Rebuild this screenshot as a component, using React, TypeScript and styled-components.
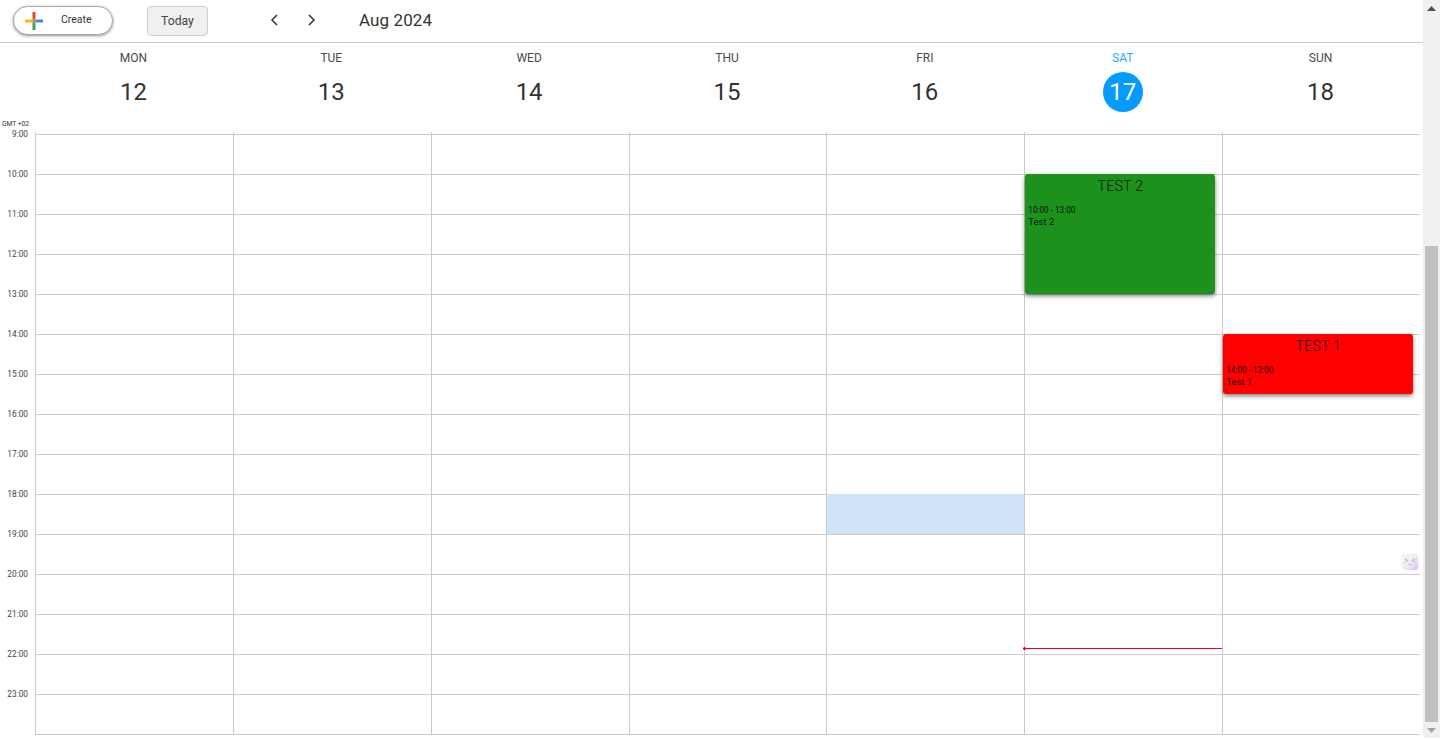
import React from "react";
import styled, { createGlobalStyle } from "styled-components";

const Global = createGlobalStyle`
  html, body { margin: 0; padding: 0; background: #fff; overflow: hidden; }
  body { font-family: Roboto, "Liberation Sans", sans-serif; color: #212121; }
`;

const Page = styled.div`
  width: 1442px; height: 744px; display: flex; align-items: flex-start; overflow: hidden;
`;
const Main = styled.div`
  width: 1423px; flex: none; display: flex; flex-direction: column;
`;
const Toolbar = styled.header`
  height: 42px; border-bottom: 1px solid #cacaca; display: flex; align-items: center; padding-left: 13px;
`;
const CreateButton = styled.button`
  width: 100px; height: 29px; margin-top: -1px; box-sizing: border-box; border: 1px solid #a9a3a3; border-radius: 15px; background: #fff;
  box-shadow: 0 1px 3px rgba(60, 40, 40, .5); display: flex; align-items: center; padding: 0 0 0 11px;
  font: 400 10.5px Roboto, sans-serif; color: #333;
  span { margin-left: 18px; margin-top: -3px; }
`;
const TodayButton = styled.button`
  width: 61px; height: 30px; margin-left: 34px; box-sizing: border-box; border: 1px solid #cfcfcf; border-radius: 4px; background: #f0f0f0;
  font: 400 12.2px Roboto, sans-serif; color: #444; padding: 0;
`;
const NavIcon = styled.svg<{ $gap: number }>`
  width: 16px; height: 16px; margin-left: ${p => p.$gap}px; margin-top: -3px; flex: none;
  fill: none; stroke: #333; stroke-width: 1.5;
`;
const Month = styled.div`
  margin-left: 40px; font-size: 17px; color: #333; margin-top: -2px; letter-spacing: .1px;
`;
const DayHeader = styled.div`
  width: 1420px; height: 89px; display: grid; grid-template-columns: 35px repeat(7, 1fr);
`;
const Gmt = styled.div`
  align-self: end; font-size: 6.8px; line-height: 8px; letter-spacing: -.1px; padding: 0 0 4px 2px; white-space: nowrap; color: #333;
`;
const DayCell = styled.div`
  display: flex; flex-direction: column; align-items: center; padding: 8px 1px 0 0;
`;
const Weekday = styled.div<{ $today?: boolean }>`
  font-size: 12px; line-height: 14px; color: ${p => (p.$today ? "#2ba6ff" : "#4a4a4a")};
`;
const DayNumber = styled.div<{ $today?: boolean }>`
  width: 40px; height: 40px; margin-top: 7px; border-radius: 50%;
  display: flex; align-items: center; justify-content: center;
  font-size: 24px; font-weight: 400; color: ${p => (p.$today ? "#fff" : "#333")}; background: ${p => (p.$today ? "#039bff" : "transparent")};
`;
const Body = styled.div`
  width: 1420px; display: grid; grid-template-columns: 35px repeat(7, 1fr);
`;
const Gutter = styled.div`
  margin-top: -18px; height: 600px;
`;
const HourLabel = styled.div`
  height: 40px; line-height: 41px; font-size: 8.3px; text-align: right; padding-right: 7px; color: #444;
`;
const Column = styled.div`
  position: relative; border-left: 1px solid #cacaca; padding-top: 2px;
`;
const Slot = styled.div`
  height: 39px; border-top: 1px solid #cacaca;
`;
const LastLine = styled.div`
  height: 0; border-top: 1px solid #cacaca;
`;
const Event = styled.div<{ $bg: string; $top: number; $h: number }>`
  position: absolute; left: 0; width: 190px; top: ${p => p.$top}px; height: ${p => p.$h}px; box-sizing: border-box;
  background: ${p => p.$bg}; border-radius: 3px; box-shadow: 0 2px 4px rgba(0, 0, 0, .5); color: #111; padding: 4px 3px 0 3px; z-index: 2;
`;
const EventTitle = styled.div`
  text-align: center; font-size: 14.5px; font-weight: 300; line-height: 18px;
`;
const EventTime = styled.div`
  margin-top: 8px; font-size: 8.2px; line-height: 12px;
`;
const EventText = styled.div`
  font-size: 9.5px; line-height: 12px;
`;
const Selection = styled.div`
  position: absolute; left: 0; right: 0; top: 362px; height: 40px; background: #cfe4f8; z-index: 1;
`;
const NowLine = styled.div`
  position: absolute; left: -2px; right: 0; top: 516px; height: 1px; background: #f00; z-index: 3;
  &::before { content: ""; position: absolute; left: 0; top: -1px; width: 3px; height: 3px; background: #f00; border-radius: 50%; }
`;
const Widget = styled.div`
  position: absolute; left: 1402px; top: 554px; width: 16px; height: 16px; border-radius: 3px; z-index: 4;
  background: linear-gradient(135deg, #f4f2f6 0%, #efeaf5 55%, #d8c0f0 100%); box-shadow: 0 0 3px rgba(120,100,160,.1);
  display: flex;
  svg { width: 16px; height: 16px; }
`;
const Scrollbar = styled.div`
  width: 17px; height: 738px; flex: none; background: #f1f1f1; display: flex; flex-direction: column; align-items: center;
`;
const Arrow = styled.svg<{ $color: string }>`
  width: 9px; height: 5px; flex: none; fill: ${p => p.$color};
`;
const UpArrow = styled(Arrow)`
  margin-top: 6px;
`;
const Thumb = styled.div`
  width: 13px; height: 476px; margin-top: 235px; background: #c0c0c0;
`;
const DownArrow = styled(Arrow)`
  margin-top: 6px;
`;

const days = [
  ["MON", 12], ["TUE", 13], ["WED", 14], ["THU", 15], ["FRI", 16], ["SAT", 17], ["SUN", 18],
] as const;
const hours = Array.from({ length: 15 }, (_, i) => `${i + 9}:00`);

const Plus = () => (
  <svg width="18" height="18" viewBox="0 0 18 18" style={{ flex: "none" }}>
    <rect x="7.5" y="0" width="3" height="7.5" fill="#ea4335" />
    <rect x="0" y="7.5" width="7.5" height="3" fill="#fbbc05" />
    <rect x="10.5" y="7.5" width="7.5" height="3" fill="#4285f4" />
    <rect x="7.5" y="10.5" width="3" height="7.5" fill="#34a853" />
    <rect x="7.5" y="7.5" width="3" height="3" fill="#a08a5a" />
  </svg>
);

export default function App() {
  return (
    <Page>
      <Global />
      <Main>
        <Toolbar>
          <CreateButton><Plus /><span>Create</span></CreateButton>
          <TodayButton>Today</TodayButton>
          <NavIcon $gap={59} viewBox="0 0 16 16"><path d="M10 3 5 8l5 5" /></NavIcon>
          <NavIcon $gap={20} viewBox="0 0 16 16"><path d="m6 3 5 5-5 5" /></NavIcon>
          <Month>Aug 2024</Month>
        </Toolbar>
        <DayHeader>
          <Gmt>GMT +02</Gmt>
          {days.map(([name, n]) => (
            <DayCell key={name}>
              <Weekday $today={n === 17}>{name}</Weekday>
              <DayNumber $today={n === 17}>{n}</DayNumber>
            </DayCell>
          ))}
        </DayHeader>
        <Body>
          <Gutter>{hours.map(h => <HourLabel key={h}>{h}</HourLabel>)}</Gutter>
          {days.map(([name, n]) => (
            <Column key={name}>
              {hours.map(h => <Slot key={h} />)}
              <LastLine />
              {n === 16 && <Selection />}
              {n === 17 && (
                <>
                  <Event $bg="#1c911c" $top={42} $h={120}>
                    <EventTitle>TEST 2</EventTitle>
                    <EventTime>10:00 - 13:00</EventTime>
                    <EventText>Test 2</EventText>
                  </Event>
                  <NowLine />
                </>
              )}
              {n === 18 && (
                <Event $bg="#ff0000" $top={202} $h={60}>
                  <EventTitle>TEST 1</EventTitle>
                  <EventTime>14:00 - 12:00</EventTime>
                  <EventText>Test 1</EventText>
                </Event>
              )}
            </Column>
          ))}
        </Body>
      </Main>
      <Widget>
        <svg viewBox="0 0 16 16" fill="none" stroke="#bdb9c2" strokeWidth="1.2">
          <path d="M3 5l2.5 1.5L3 8M13 5l-2.5 1.5L13 8M6.5 10.5h3" />
        </svg>
      </Widget>
      <Scrollbar>
        <UpArrow $color="#505050" viewBox="0 0 9 5"><path d="M4.5 0 9 5H0z" /></UpArrow>
        <Thumb />
        <DownArrow $color="#a3a3a3" viewBox="0 0 9 5"><path d="M0 0h9L4.5 5z" /></DownArrow>
      </Scrollbar>
    </Page>
  );
}
